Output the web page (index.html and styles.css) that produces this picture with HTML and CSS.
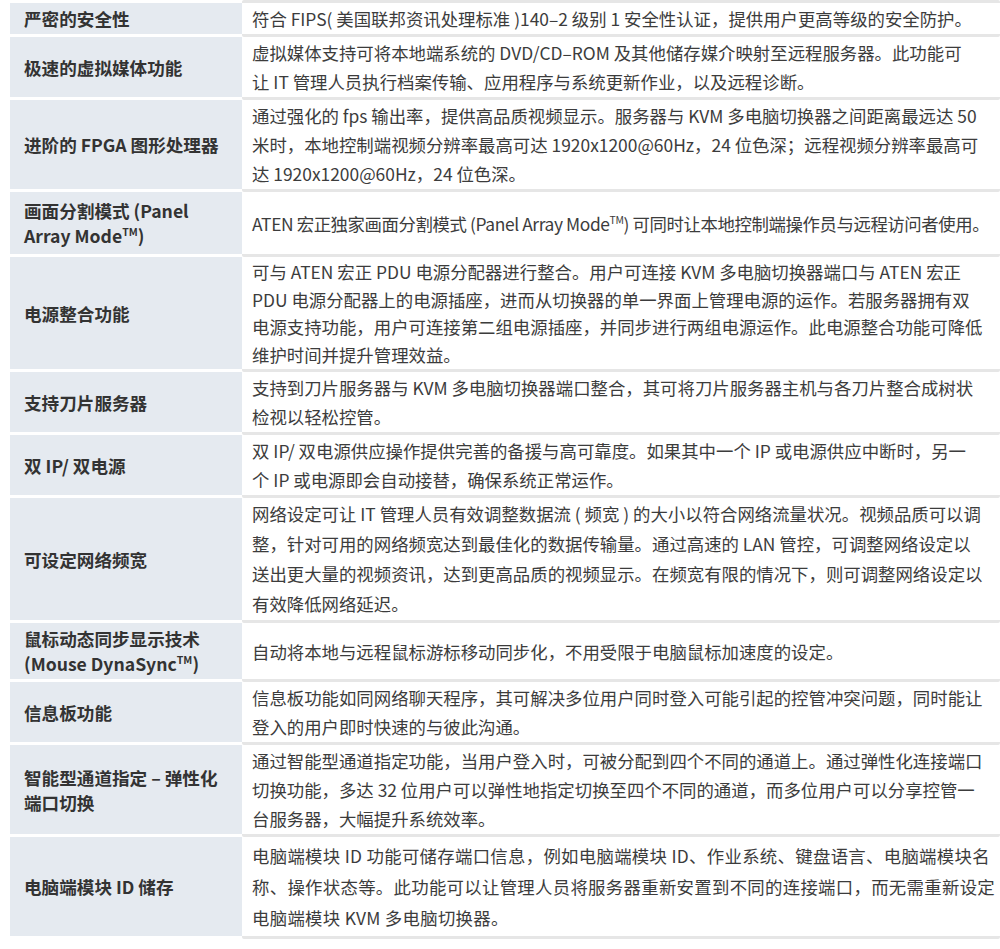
FILE: index.html
```html
<!DOCTYPE html>
<html lang="zh-CN">
<head>
<meta charset="utf-8">
<title>功能特色</title>
<link rel="stylesheet" href="styles.css">
</head>
<body>
<div class="table">
  <div class="row first">
    <div class="label"><div>严密的安全性</div></div>
    <div class="desc"><div>符合 FIPS( 美国联邦资讯处理标准 )140–2 级别 1 安全性认证，提供用户更高等级的安全防护。</div></div>
  </div>
  <div class="row">
    <div class="label"><div>极速的虚拟媒体功能</div></div>
    <div class="desc"><div>虚拟媒体支持可将本地端系统的 DVD/CD–ROM 及其他储存媒介映射至远程服务器。此功能可<br>让 IT 管理人员执行档案传输、应用程序与系统更新作业，以及远程诊断。</div></div>
  </div>
  <div class="row">
    <div class="label"><div>进阶的 FPGA 图形处理器</div></div>
    <div class="desc"><div>通过强化的 fps 输出率，提供高品质视频显示。服务器与 KVM 多电脑切换器之间距离最远达 50<br>米时，本地控制端视频分辨率最高可达 1920x1200@60Hz，24 位色深；远程视频分辨率最高可<br>达 1920x1200@60Hz，24 位色深。</div></div>
  </div>
  <div class="row">
    <div class="label two"><div>画面分割模式 (Panel<br>Array Mode<sup>TM</sup>)</div></div>
    <div class="desc narrow"><div>ATEN 宏正独家画面分割模式 (Panel Array Mode<sup>TM</sup>) 可同时让本地控制端操作员与远程访问者使用。</div></div>
  </div>
  <div class="row">
    <div class="label"><div>电源整合功能</div></div>
    <div class="desc tight"><div>可与 ATEN 宏正 PDU 电源分配器进行整合。用户可连接 KVM 多电脑切换器端口与 ATEN 宏正<br>PDU 电源分配器上的电源插座，进而从切换器的单一界面上管理电源的运作。若服务器拥有双<br>电源支持功能，用户可连接第二组电源插座，并同步进行两组电源运作。此电源整合功能可降低<br>维护时间并提升管理效益。</div></div>
  </div>
  <div class="row">
    <div class="label"><div>支持刀片服务器</div></div>
    <div class="desc"><div>支持到刀片服务器与 KVM 多电脑切换器端口整合，其可将刀片服务器主机与各刀片整合成树状<br>检视以轻松控管。</div></div>
  </div>
  <div class="row">
    <div class="label"><div>双 IP/ 双电源</div></div>
    <div class="desc"><div>双 IP/ 双电源供应操作提供完善的备援与高可靠度。如果其中一个 IP 或电源供应中断时，另一<br>个 IP 或电源即会自动接替，确保系统正常运作。</div></div>
  </div>
  <div class="row">
    <div class="label"><div>可设定网络频宽</div></div>
    <div class="desc loose"><div>网络设定可让 IT 管理人员有效调整数据流 ( 频宽 ) 的大小以符合网络流量状况。视频品质可以调<br>整，针对可用的网络频宽达到最佳化的数据传输量。通过高速的 LAN 管控，可调整网络设定以<br>送出更大量的视频资讯，达到更高品质的视频显示。在频宽有限的情况下，则可调整网络设定以<br>有效降低网络延迟。</div></div>
  </div>
  <div class="row">
    <div class="label two short"><div>鼠标动态同步显示技术<br>(Mouse DynaSync<sup>TM</sup>)</div></div>
    <div class="desc"><div>自动将本地与远程鼠标游标移动同步化，不用受限于电脑鼠标加速度的设定。</div></div>
  </div>
  <div class="row">
    <div class="label"><div>信息板功能</div></div>
    <div class="desc"><div>信息板功能如同网络聊天程序，其可解决多位用户同时登入可能引起的控管冲突问题，同时能让<br>登入的用户即时快速的与彼此沟通。</div></div>
  </div>
  <div class="row">
    <div class="label two"><div>智能型通道指定 – 弹性化<br>端口切换</div></div>
    <div class="desc"><div>通过智能型通道指定功能，当用户登入时，可被分配到四个不同的通道上。通过弹性化连接端口<br>切换功能，多达 32 位用户可以弹性地指定切换至四个不同的通道，而多位用户可以分享控管一<br>台服务器，大幅提升系统效率。</div></div>
  </div>
  <div class="row">
    <div class="label"><div>电脑端模块 ID 储存</div></div>
    <div class="desc wide"><div>电脑端模块 ID 功能可储存端口信息，例如电脑端模块 ID、作业系统、键盘语言、电脑端模块名<br>称、操作状态等。此功能可以让管理人员将服务器重新安置到不同的连接端口，而无需重新设定<br>电脑端模块 KVM 多电脑切换器。</div></div>
  </div>
</div>
</body>
</html>
```

FILE: styles.css
```css
html, body {
  margin: 0;
  padding: 0;
  background: #ffffff;
}

body {
  font-family: "Noto Sans CJK SC", "Liberation Sans", sans-serif;
  color: #3c3c3c;
  width: 1000px;
  overflow: hidden;
}

.table {
  margin-left: 10px;
  display: flex;
  flex-direction: column;
}

.row {
  display: grid;
  grid-template-columns: 232px 758px;
}

.label {
  background: #e5eaf0;
  border-bottom: 3px solid #ffffff;
  padding: 0 6px 0 14px;
  font-size: 17.6px;
  font-weight: 700;
  line-height: 25px;
  color: #333333;
  display: flex;
  align-items: center;
  white-space: nowrap;
}

.label.two {
  padding-top: 6px;
  padding-bottom: 6px;
}

.label.two.short {
  padding-top: 3px;
  padding-bottom: 3px;
}

.desc {
  background: #ffffff;
  border-bottom: 3px solid #e6e6e6;
  padding: 1px 0 1px 10px;
  font-size: 17.4px;
  line-height: 29px;
  white-space: nowrap;
  display: flex;
  align-items: center;
  border-radius: 2px;
}

.first .label {
  border-top: 3px solid #ffffff;
}

.first .desc {
  border-top: 3px solid #e6e6e6;
}

.desc.narrow {
  letter-spacing: -0.4px;
}

.desc.tight {
  line-height: 27.5px;
}

.desc.loose {
  line-height: 30px;
}

.desc.wide {
  line-height: 31px;
  padding-top: 3px;
  padding-bottom: 3px;
  letter-spacing: 0.3px;
}

sup {
  font-size: 0.6em;
  line-height: 0;
  vertical-align: 0.7em;
}
```
